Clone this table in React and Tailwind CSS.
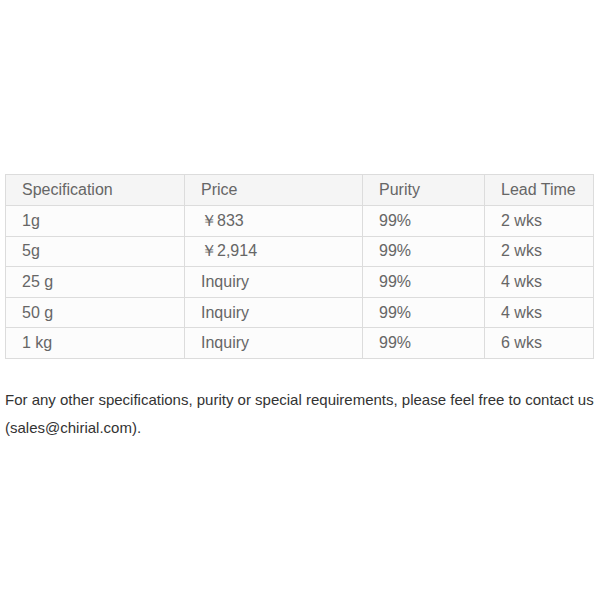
import React from 'react';

const ROWS = [
  { spec: '1g', price: '￥833', purity: '99%', lead: '2 wks' },
  { spec: '5g', price: '￥2,914', purity: '99%', lead: '2 wks' },
  { spec: '25 g', price: 'Inquiry', purity: '99%', lead: '4 wks' },
  { spec: '50 g', price: 'Inquiry', purity: '99%', lead: '4 wks' },
  { spec: '1 kg', price: 'Inquiry', purity: '99%', lead: '6 wks' }
];

export default function App() {
  return (
    <div className="w-[600px] h-[600px] bg-white px-[5px] pt-[174px] font-['Liberation_Sans',Arial,sans-serif]">
      {/* Price table */}
      <table className="w-[588px] border-collapse text-[16px] text-[#666] table-fixed">
        <colgroup>
          <col className="w-[179px]" />
          <col className="w-[178px]" />
          <col className="w-[122px]" />
          <col className="w-[109px]" />
        </colgroup>
        <thead>
          <tr className="h-[31px] bg-[#f5f5f5]">
            <th className="border border-[#dcdcdc] px-4 text-left font-normal">Specification</th>
            <th className="border border-[#dcdcdc] px-4 text-left font-normal">Price</th>
            <th className="border border-[#dcdcdc] px-4 text-left font-normal">Purity</th>
            <th className="border border-[#dcdcdc] px-4 text-left font-normal">Lead Time</th>
          </tr>
        </thead>
        <tbody>
          {ROWS.map(row => (
            <tr key={row.spec} className="h-[30.6px] bg-[#fcfcfc]">
              <td className="border border-[#dcdcdc] px-4">{row.spec}</td>
              <td className="border border-[#dcdcdc] px-4">{row.price}</td>
              <td className="border border-[#dcdcdc] px-4">{row.purity}</td>
              <td className="border border-[#dcdcdc] px-4">{row.lead}</td>
            </tr>
          ))}
        </tbody>
      </table>

      <p className="mt-[27px] text-[15px] leading-[28px] text-[#333]">
        For any other specifications, purity or special requirements, please feel free to contact us (sales@chirial.com).
      </p>
    </div>
  );
}
